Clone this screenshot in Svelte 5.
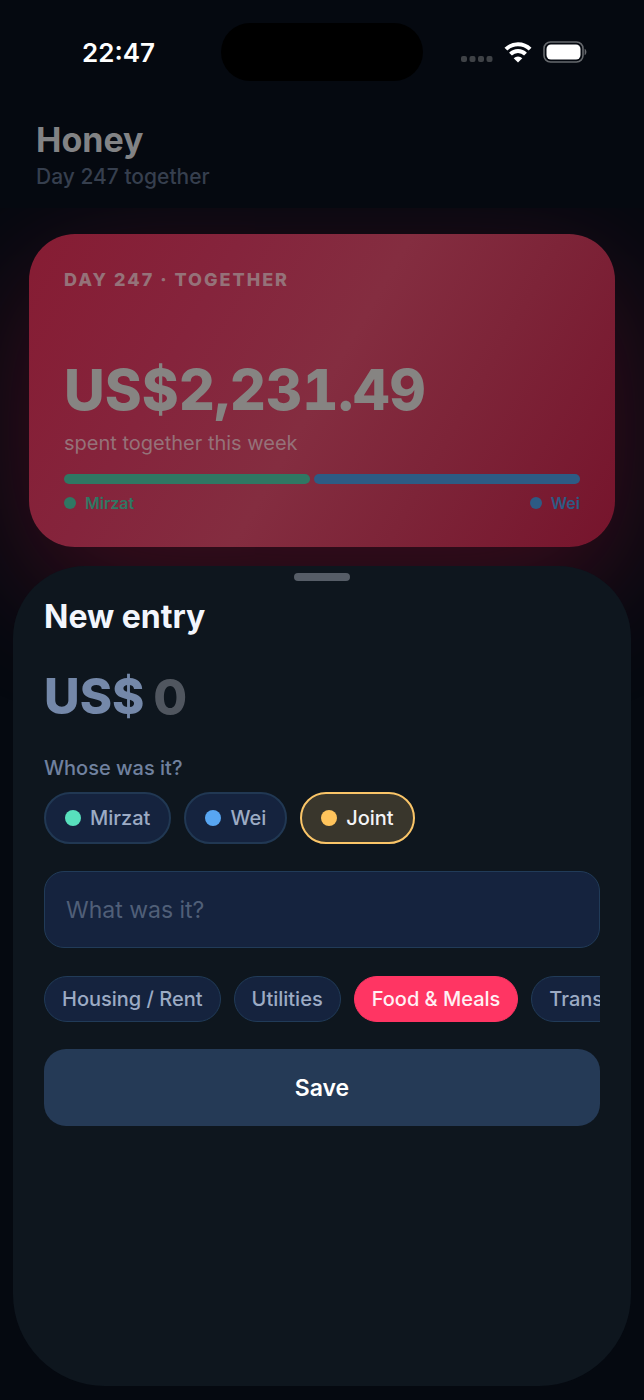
<script>
  let amount = '';
  let note = '';
  let owner = 'Joint';
  let category = 'Food & Meals';

  const owners = [
    { name: 'Mirzat', tone: 'mint' },
    { name: 'Wei', tone: 'blue' },
    { name: 'Joint', tone: 'gold' }
  ];

  const split = [
    { name: 'Mirzat', tone: 'mint', share: 48 },
    { name: 'Wei', tone: 'blue', share: 52 }
  ];

  const categories = ['Housing / Rent', 'Utilities', 'Food & Meals', 'Transport'];

  function handleSubmit() {
    amount = '';
    note = '';
  }
</script>

<div class="app">
  <div class="status-bar">
    <span class="time">22:47</span>
    <span class="island"></span>
    <span class="status-icons">
      <svg width="32" height="22" viewBox="0 0 32 22" fill="#3f4246" aria-hidden="true">
        <rect x="0" y="15" width="6" height="6" rx="2" />
        <rect x="8.500" y="15" width="6" height="6" rx="2" />
        <rect x="17" y="15" width="6" height="6" rx="2" />
        <rect x="25.500" y="15" width="6" height="6" rx="2" />
      </svg>
      <svg width="28" height="22" viewBox="0 0 28 22" fill="none" stroke="#fff" stroke-width="4" aria-hidden="true">
        <path d="M1.900 8.200a17.200 17.200 0 0 1 24.200 0" />
        <path d="M6.500 13.200a10.600 10.600 0 0 1 15 0" />
        <path d="M14 21.600l-4.300-4.300a6 6 0 0 1 8.600 0z" fill="#fff" stroke="none" />
      </svg>
      <svg width="44" height="22" viewBox="0 0 44 22" aria-hidden="true">
        <rect x="1" y="1" width="39" height="20" rx="6.500" fill="none" stroke="#66696d" stroke-width="1.600" />
        <rect x="3.500" y="3.500" width="34" height="15" rx="4.500" fill="#fff" />
        <path d="M41.600 7.800c2.400 1 2.400 5.400 0 6.400z" fill="#66696d" />
      </svg>
    </span>
  </div>

  <header>
    <h1>Honey</h1>
    <p>Day 247 together</p>
  </header>

  <main>
    <section class="card">
      <p class="eyebrow">DAY 247 · TOGETHER</p>
      <p class="total">US$2,231.49</p>
      <p class="caption">spent together this week</p>
      <div class="split">
        {#each split as part}
          <span class="bar {part.tone}" style="flex-grow: {part.share}"></span>
        {/each}
      </div>
      <div class="legend">
        {#each split as part}
          <span class="person {part.tone}"><i class="dot"></i>{part.name}</span>
        {/each}
      </div>
    </section>

    <form class="sheet" on:submit|preventDefault={handleSubmit}>
      <span class="grabber"></span>
      <h2>New entry</h2>

      <div class="amount">
        <label for="amount">US$</label>
        <input id="amount" bind:value={amount} inputmode="decimal" placeholder="0" />
      </div>

      <p class="question" id="owner-label">Whose was it?</p>
      <div class="owners" role="group" aria-labelledby="owner-label">
        {#each owners as o}
          <button
            type="button"
            class="owner {o.tone}"
            class:selected={owner === o.name}
            aria-pressed={owner === o.name}
            on:click={() => owner = o.name}
          >
            <i class="dot"></i><span>{o.name}</span>
          </button>
        {/each}
      </div>

      <input class="note" bind:value={note} placeholder="What was it?" aria-label="What was it?" />

      <div class="categories">
        {#each categories as cat}
          <button
            type="button"
            class="category"
            class:selected={category === cat}
            aria-pressed={category === cat}
            on:click={() => category = cat}
          >
            {cat}
          </button>
        {/each}
      </div>

      <button type="submit" class="save">Save</button>
    </form>
  </main>
</div>

<style>
  :global(body) {
    background: #050910;
  }

  .app {
    display: flex;
    flex-direction: column;
    min-height: 100vh;
    box-sizing: border-box;
    background: #050910;
    font-family: Inter, "Liberation Sans", sans-serif;
    overflow: hidden;
  }

  h1, h2, p {
    margin: 0;
  }

  button, input {
    font-family: inherit;
    box-sizing: border-box;
  }

  .status-bar {
    display: grid;
    grid-template-columns: 1fr auto 1fr;
    align-items: center;
    justify-items: center;
    padding: 23px 16px 0;
  }

  .time {
    color: #fff;
    font-size: 26px;
    font-weight: 600;
  }

  .island {
    width: 202px;
    height: 58px;
    border-radius: 29px;
    background: #000;
  }

  .status-icons {
    display: flex;
    align-items: center;
    gap: 11px;
    padding-right: 4px;
  }

  header {
    padding: 37px 36px 18px;
  }

  h1 {
    color: #828385;
    font-size: 34px;
    font-weight: 700;
    line-height: 44px;
  }

  header p {
    margin-top: 2px;
    color: #363f4e;
    font-size: 21px;
    font-weight: 500;
    line-height: 26px;
  }

  main {
    flex: 1;
    display: flex;
    flex-direction: column;
    overflow: hidden;
  }

  .card {
    margin: 26px 29px 0;
    padding: 34px 35px 33px;
    border-radius: 46px;
    background: linear-gradient(120deg, #861c33 0%, #85243c 28%, #842d40 50%, #7d2438 70%, #76142c 100%);
    box-shadow: 0 40px 130px rgba(200, 24, 64, 0.3);
  }

  .eyebrow {
    color: #957279;
    font-size: 18px;
    font-weight: 800;
    line-height: 24px;
    letter-spacing: 2px;
  }

  .total {
    margin-top: 64px;
    color: #868482;
    font-size: 56px;
    font-weight: 800;
    line-height: 68px;
    font-variant-numeric: tabular-nums;
  }

  .caption {
    margin-top: 6px;
    color: #957279;
    font-size: 20px;
    font-weight: 400;
    line-height: 26px;
  }

  .split {
    display: flex;
    gap: 4px;
    margin-top: 18px;
  }

  .bar {
    height: 10px;
    border-radius: 5px;
  }

  .split .mint {
    background: #2f7763;
  }

  .split .blue {
    background: #2d5b84;
  }

  .legend {
    display: flex;
    justify-content: space-between;
    margin-top: 8px;
  }

  .person {
    display: flex;
    align-items: center;
    gap: 9px;
    font-size: 16px;
    font-weight: 600;
    line-height: 22px;
  }

  .person.mint {
    color: #2f7763;
  }

  .person.blue {
    color: #2d5b84;
  }

  .person .dot {
    width: 12px;
    height: 12px;
    border-radius: 50%;
    background: currentColor;
  }

  .sheet {
    flex: 1;
    display: flex;
    flex-direction: column;
    position: relative;
    margin: 19px 13px 14px;
    padding: 7px 31px 40px;
    border-radius: 72px 72px 92px 92px;
    background: #0e161e;
  }

  .grabber {
    align-self: center;
    width: 56px;
    height: 8px;
    border-radius: 4px;
    background: #565d67;
  }

  h2 {
    margin-top: 14px;
    color: #f3f6fd;
    font-size: 32px;
    font-weight: 700;
    line-height: 44px;
  }

  .amount {
    display: flex;
    align-items: center;
    gap: 9px;
    margin-top: 28px;
    font-size: 49px;
    font-weight: 800;
    line-height: 60px;
    color: #7488a9;
  }

  .amount input {
    flex: 1;
    min-width: 0;
    height: 60px;
    padding: 0;
    border: none;
    outline: none;
    background: none;
    color: #f3f6fd;
    font-size: 49px;
    font-weight: 800;
  }

  .amount input::placeholder {
    color: #50565f;
    opacity: 1;
  }

  .question {
    margin-top: 28px;
    color: #70819f;
    font-size: 20px;
    font-weight: 500;
    line-height: 26px;
  }

  .owners {
    display: flex;
    gap: 13px;
    margin-top: 11px;
  }

  .owner {
    display: flex;
    align-items: center;
    gap: 9px;
    height: 52px;
    padding: 0 19px;
    border: 2px solid #213853;
    border-radius: 26px;
    background: #15233e;
    color: #9cabc4;
    font-size: 20px;
    font-weight: 500;
    cursor: pointer;
  }

  .owner .dot {
    width: 16px;
    height: 16px;
    border-radius: 50%;
  }

  .owner.mint .dot {
    background: #58e0bd;
  }

  .owner.blue .dot {
    background: #58a6f2;
  }

  .owner.gold .dot {
    background: #ffc45c;
  }

  .owner.selected {
    border-color: #fac568;
    background: #39362c;
    color: #f3f4f6;
  }

  .note {
    width: 100%;
    height: 77px;
    margin-top: 27px;
    padding: 0 21px;
    border: 1px solid #213b58;
    border-radius: 20px;
    outline: none;
    background: #15233e;
    color: #f3f6fd;
    font-size: 23px;
  }

  .note::placeholder {
    color: #505f78;
    opacity: 1;
  }

  .categories {
    display: flex;
    gap: 13px;
    margin-top: 28px;
    overflow: hidden;
  }

  .category {
    flex: none;
    height: 46px;
    padding: 0 17px;
    border: 1px solid #213b58;
    border-radius: 23px;
    background: #15233e;
    color: #9cabc4;
    font-size: 20px;
    font-weight: 500;
    white-space: nowrap;
    cursor: pointer;
  }

  .category.selected {
    border-color: #ff3563;
    background: #ff3563;
    color: #fff0f4;
  }

  .save {
    width: 100%;
    height: 77px;
    margin-top: 27px;
    border: none;
    border-radius: 22px;
    background: #253a56;
    color: #fff;
    font-size: 23px;
    font-weight: 600;
    cursor: pointer;
  }
</style>
